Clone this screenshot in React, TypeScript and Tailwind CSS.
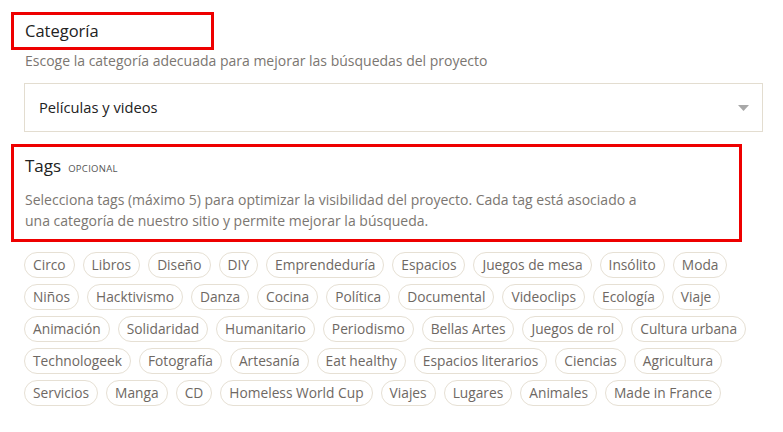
import React from "react";

const rows: string[][] = [
  ["Circo", "Libros", "Diseño", "DIY", "Emprendeduría", "Espacios", "Juegos de mesa", "Insólito", "Moda"],
  ["Niños", "Hacktivismo", "Danza", "Cocina", "Política", "Documental", "Videoclips", "Ecología", "Viaje"],
  ["Animación", "Solidaridad", "Humanitario", "Periodismo", "Bellas Artes", "Juegos de rol", "Cultura urbana"],
  ["Technologeek", "Fotografía", "Artesanía", "Eat healthy", "Espacios literarios", "Ciencias", "Agricultura"],
  ["Servicios", "Manga", "CD", "Homeless World Cup", "Viajes", "Lugares", "Animales", "Made in France"],
];

export default function App() {
  return (
    <div
      className="relative w-[783px] h-[432px] bg-white pl-[24px] pr-[20px] pt-[19px] overflow-hidden"
      style={{ fontFamily: "'Open Sans', Lato, sans-serif" }}
    >
      <div className="text-[16.5px] leading-[24px] text-[#222] pl-[1px]">Categoría</div>
      <div className="mt-[8px] text-[14px] leading-[20px] text-[#7b7671] pl-[1px]">
        Escoge la categoría adecuada para mejorar las búsquedas del proyecto
      </div>
      <div className="mt-[12px] h-[49px] border border-[#e3ddd0] flex items-center justify-between pl-[14px] pr-[13px]">
        <span className="text-[14.7px] text-[#222]">Películas y videos</span>
        <svg width="11" height="6" viewBox="0 0 11 6">
          <path d="M0 0 L11 0 L5.5 6 Z" fill="#a8a8a8" />
        </svg>
      </div>
      <div className="mt-[22px] flex items-baseline gap-[7px] leading-[24px] pl-[1px]">
        <span className="text-[17px] text-[#222]">Tags</span>
        <span className="text-[9.5px] tracking-[0.3px] text-[#555]">OPCIONAL</span>
      </div>
      <div className="mt-[8px] text-[14px] leading-[21px] text-[#7b7671] pl-[1px]">
        Selecciona tags (máximo 5) para optimizar la visibilidad del proyecto. Cada tag está asociado a
        <br />
        una categoría de nuestro sitio y permite mejorar la búsqueda.
      </div>
      <div className="mt-[21px] flex flex-col gap-[6px]">
        {rows.map((row, i) => (
          <div key={i} className="flex gap-[8px]">
            {row.map((t) => (
              <span
                key={t}
                className="h-[26px] px-[8px] flex items-center rounded-full border border-[#e6e0d4] text-[13.75px] text-[#6e6863] whitespace-nowrap"
              >
                {t}
              </span>
            ))}
          </div>
        ))}
      </div>
      <div className="absolute left-[11px] top-[12px] w-[203px] h-[38px] border-[3px] border-[#ee0000]" />
      <div className="absolute left-[11px] top-[144px] w-[731px] h-[98px] border-[3px] border-[#ee0000]" />
    </div>
  );
}
